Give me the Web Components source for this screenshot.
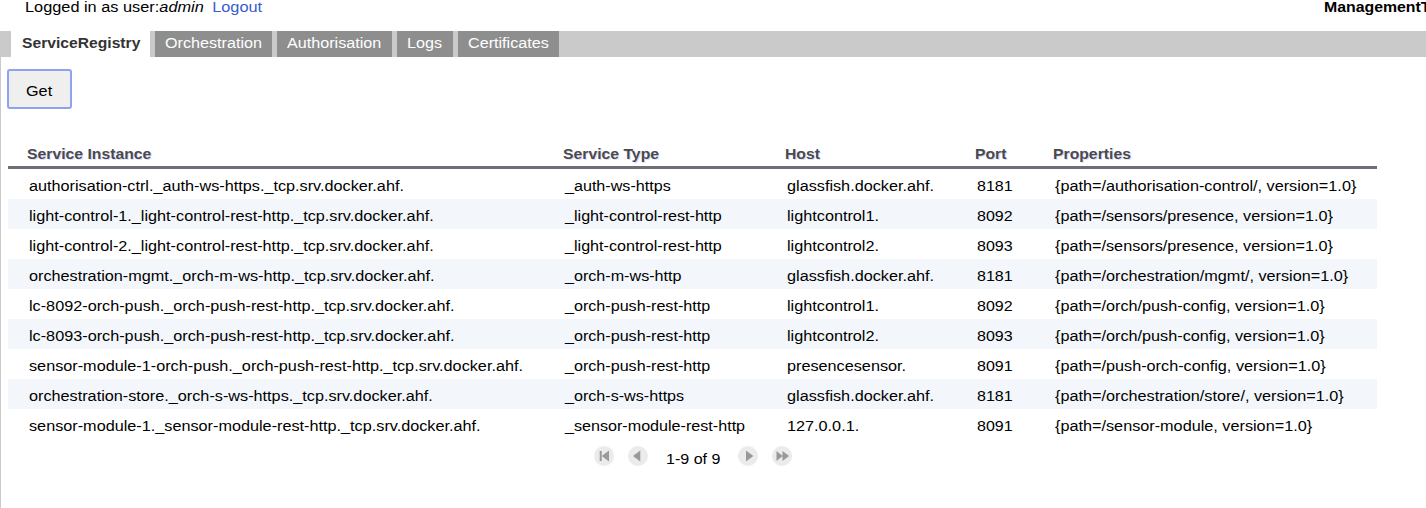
<!DOCTYPE html>
<html lang="en"><head><meta charset="utf-8"><title>Management Tool</title>
<style>html,body{margin:0;height:100%;overflow:hidden;background:#fff;font:15.5px/20px "Liberation Sans",Arial,sans-serif;color:#000}</style></head>
<body><management-app></management-app>
<script>
const define = (name, html, init) => customElements.define(name, class extends HTMLElement {
  connectedCallback() {
    if (this.shadowRoot) return;
    const t = document.createElement('template');
    t.innerHTML = html;
    this.attachShadow({mode: 'open'}).append(t.content.cloneNode(true));
    if (init) init(this, this.shadowRoot);
  }
});

// Slightly extended type: --w is the horizontal stretch of the text.
define('wide-text', `<style>
:host{display:block;width:max-content;white-space:pre;transform:scaleX(var(--w,1.047));transform-origin:0 50%}
</style><slot></slot>`);

define('user-bar', `<style>
:host{display:flex;justify-content:space-between;height:31px;line-height:17px;padding-left:25px;box-sizing:border-box}
a{color:#3a5ccc;text-decoration:none;margin-left:8px}
b{flex:none;width:102px}
wide-text{--w:1.053;margin-top:-2px}
b wide-text{--w:1.022}
</style><wide-text>Logged in as user:<i>admin</i><a>Logout</a></wide-text><b><wide-text>ManagementT</wide-text></b>`);

define('nav-tab', `<style>
:host{display:block;box-sizing:border-box;height:26px;padding:2px 0 0 10px;background:#8e8e8e;color:#fff;--w:1.042}
:host([selected]){background:#fff;color:#333;font-weight:bold;padding-left:10.5px;--w:1.01}
</style><wide-text><slot></slot></wide-text>`);

define('tab-bar', `<style>
:host{display:flex;gap:5px;padding-left:11px;height:26px;background:#cacaca}
</style><nav-tab selected style="width:139px">ServiceRegistry</nav-tab><nav-tab style="width:117px">Orchestration</nav-tab><nav-tab style="width:115px">Authorisation</nav-tab><nav-tab style="width:56px">Logs</nav-tab><nav-tab style="width:101px">Certificates</nav-tab>`);

define('action-button', `<style>
:host{display:block;width:65px;height:40px}
button{display:flex;width:100%;height:100%;box-sizing:border-box;border:2px solid #8ea3f0;border-radius:3px;background:#efefef;font:inherit;color:#000;padding:10px 0 0 17px;margin:0}
</style><button><wide-text><slot></slot></wide-text></button>`);

const rows = [
['authorisation-ctrl._auth-ws-https._tcp.srv.docker.ahf.','_auth-ws-https','glassfish.docker.ahf.','8181','{path=/authorisation-control/, version=1.0}'],
['light-control-1._light-control-rest-http._tcp.srv.docker.ahf.','_light-control-rest-http','lightcontrol1.','8092','{path=/sensors/presence, version=1.0}'],
['light-control-2._light-control-rest-http._tcp.srv.docker.ahf.','_light-control-rest-http','lightcontrol2.','8093','{path=/sensors/presence, version=1.0}'],
['orchestration-mgmt._orch-m-ws-http._tcp.srv.docker.ahf.','_orch-m-ws-http','glassfish.docker.ahf.','8181','{path=/orchestration/mgmt/, version=1.0}'],
['lc-8092-orch-push._orch-push-rest-http._tcp.srv.docker.ahf.','_orch-push-rest-http','lightcontrol1.','8092','{path=/orch/push-config, version=1.0}'],
['lc-8093-orch-push._orch-push-rest-http._tcp.srv.docker.ahf.','_orch-push-rest-http','lightcontrol2.','8093','{path=/orch/push-config, version=1.0}'],
['sensor-module-1-orch-push._orch-push-rest-http._tcp.srv.docker.ahf.','_orch-push-rest-http','presencesensor.','8091','{path=/push-orch-config, version=1.0}'],
['orchestration-store._orch-s-ws-https._tcp.srv.docker.ahf.','_orch-s-ws-https','glassfish.docker.ahf.','8181','{path=/orchestration/store/, version=1.0}'],
['sensor-module-1._sensor-module-rest-http._tcp.srv.docker.ahf.','_sensor-module-rest-http','127.0.0.1.','8091','{path=/sensor-module, version=1.0}']];

define('service-table', `<style>
:host{display:block;width:1369px}
.row{display:grid;grid-template-columns:536px 222px 190px 78px 1fr;height:30px;box-sizing:border-box;padding:7px 0 0 20.8px}
.row.alt{background:#f3f7fb}
.row wide-text:nth-child(2){--w:1.04}
.row wide-text:nth-child(4){--w:1.033}
.row.head{height:26px;padding:1px 0 0 18.6px;border-bottom:3px solid #6f6e77}
.row.head wide-text{--w:1.016;font-weight:bold;color:#4b4a4a;text-shadow:#ddf 1px 1px 0}
</style><div class="row head"><wide-text>Service Instance</wide-text><wide-text>Service Type</wide-text><wide-text>Host</wide-text><wide-text>Port</wide-text><wide-text>Properties</wide-text></div>`,
(el, root) => rows.forEach((r, i) => {
  const d = document.createElement('div');
  d.className = i % 2 ? 'row alt' : 'row';
  r.forEach(c => { const s = document.createElement('wide-text'); s.textContent = c; d.append(s); });
  root.append(d);
}));

const glyphs = {
  first: '<path d="M5.7 5h2v10h-2zM15 4.6v10.8L7.7 10z"/>',
  prev: '<path d="M12.3 4.6v10.8L5 10z"/>',
  next: '<path d="M8 4.6v10.8l7.3-5.4z"/>',
  last: '<path d="M4.5 5v10L10.7 10zM10.5 5v10L17 10z"/>'
};
define('page-button', `<style>:host{display:block;width:20px;height:20px}svg{display:block}</style><svg width="20" height="20"></svg>`,
(el, root) => { root.querySelector('svg').innerHTML = '<circle cx="10" cy="10" r="10" fill="#ebebeb"/><g fill="#999">' + glyphs[el.getAttribute('kind')] + '</g>'; });

define('table-pager', `<style>
:host{display:flex;padding-left:586px;height:24px}
page-button{margin:7px 14px 0 0}
span{width:72px;margin-top:10px;padding-left:4px;box-sizing:border-box;margin-right:4px;--w:1.035}
</style><page-button kind="first"></page-button><page-button kind="prev"></page-button><span><wide-text>1-9 of 9</wide-text></span><page-button kind="next"></page-button><page-button kind="last"></page-button>`);

define('management-app', `<style>
:host{display:flex;flex-direction:column;height:508px;width:1426px;overflow:hidden}
main{flex:1;border-left:1px solid #cacaca;padding:12px 0 0 7px;min-height:0}
action-button{margin:0 0 34px -1px}
</style><user-bar></user-bar><tab-bar></tab-bar><main><action-button>Get</action-button><service-table></service-table><table-pager></table-pager></main>`);
</script></body></html>
